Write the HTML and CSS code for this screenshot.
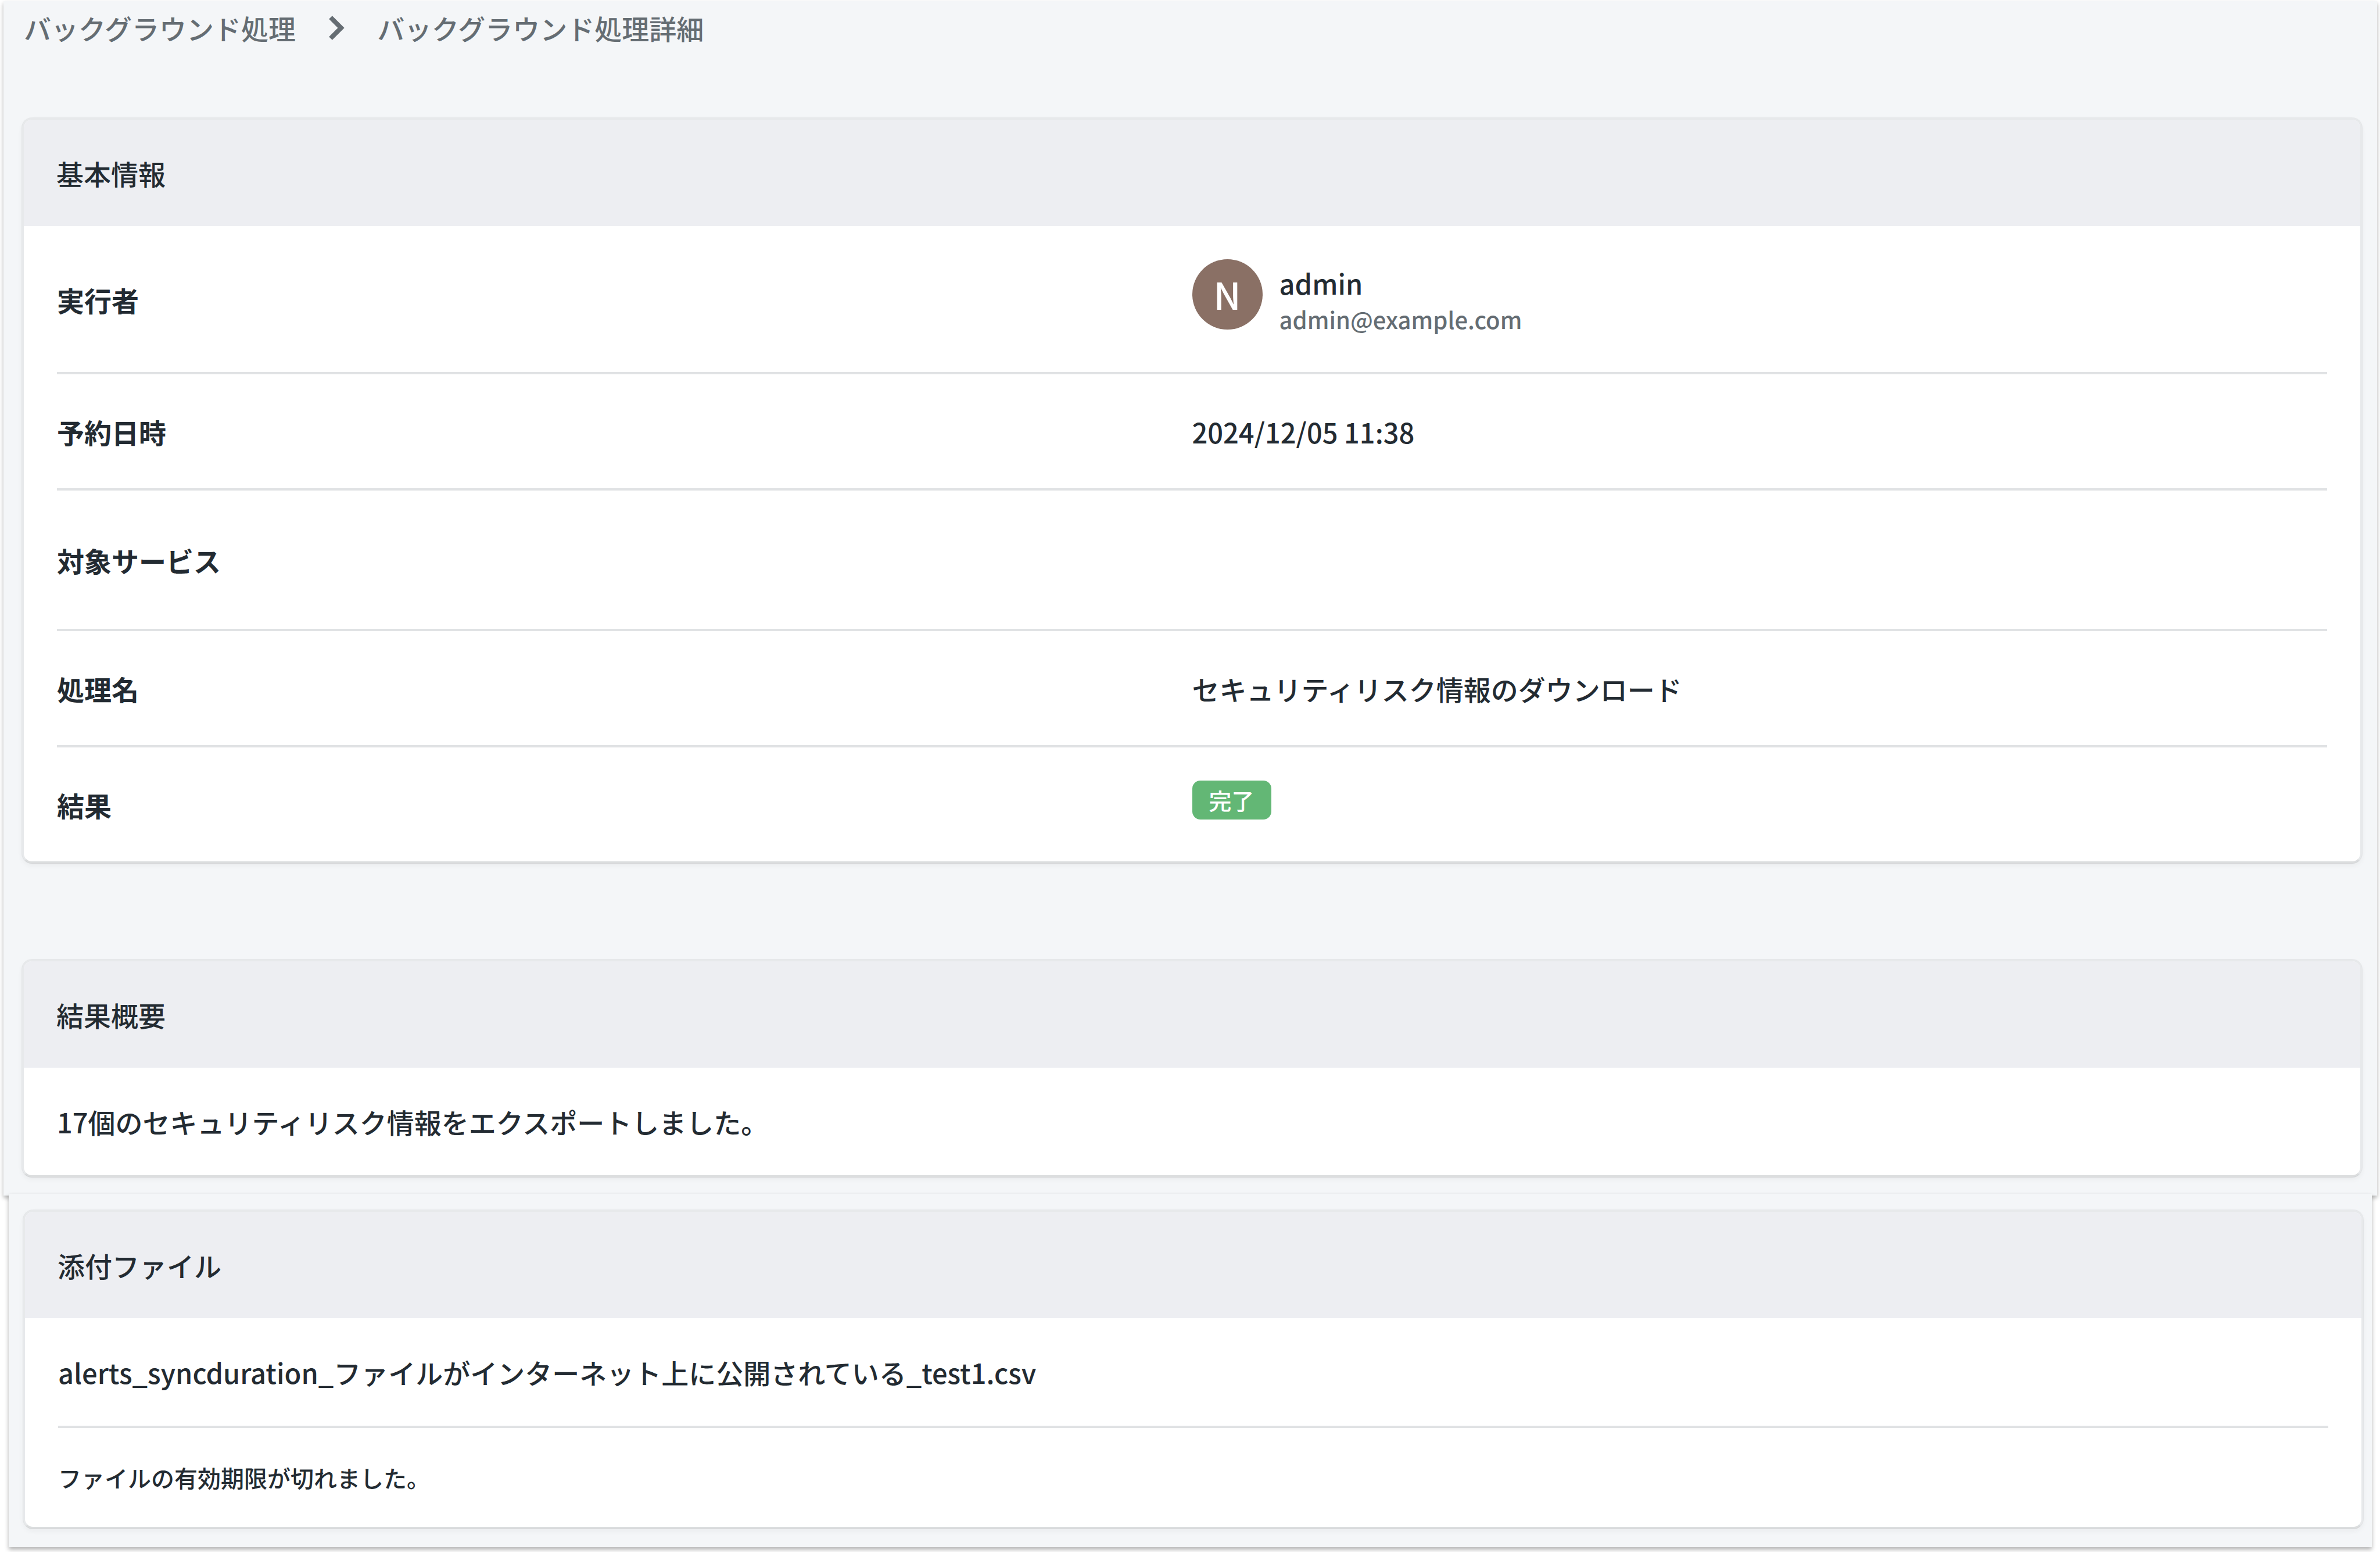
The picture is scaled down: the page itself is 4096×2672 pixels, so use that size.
FILE: index.html
```html
<!DOCTYPE html>
<html lang="ja">
<head>
  <meta charset="UTF-8" />
  <meta name="viewport" content="width=device-width, initial-scale=1.0"/>
  <title>バックグラウンド処理詳細</title>
  <link rel="stylesheet" href="styles.css">
</head>
<body>
  <main class="panel panel-main">
    <nav class="breadcrumb">
      <a href="#">バックグラウンド処理</a>
      <svg class="chevron" viewBox="0 0 28 44" aria-hidden="true">
        <path d="M4 4 L22 22 L4 40" fill="none" stroke="currentColor" stroke-width="8"/>
      </svg>
      <span>バックグラウンド処理詳細</span>
    </nav>

    <section class="card">
      <h2 class="card-header">基本情報</h2>
      <dl class="card-body">
        <div class="row">
          <dt>実行者</dt>
          <dd class="user">
            <span class="avatar">N</span>
            <div class="user-text">
              <div class="user-name">admin</div>
              <div class="user-mail">admin@example.com</div>
            </div>
          </dd>
        </div>
        <div class="row">
          <dt>予約日時</dt>
          <dd>2024/12/05 11:38</dd>
        </div>
        <div class="row row-service">
          <dt>対象サービス</dt>
          <dd></dd>
        </div>
        <div class="row">
          <dt>処理名</dt>
          <dd>セキュリティリスク情報のダウンロード</dd>
        </div>
        <div class="row">
          <dt>結果</dt>
          <dd class="status"><span class="badge">完了</span></dd>
        </div>
      </dl>
    </section>

    <section class="card">
      <h2 class="card-header">結果概要</h2>
      <div class="card-body">
        <p class="line">17個のセキュリティリスク情報をエクスポートしました。</p>
      </div>
    </section>
  </main>

  <aside class="panel panel-files">
    <section class="card">
      <h2 class="card-header">添付ファイル</h2>
      <div class="card-body">
        <p class="line">alerts_syncduration_ファイルがインターネット上に公開されている_test1.csv</p>
        <p class="line note">ファイルの有効期限が切れました。</p>
      </div>
    </section>
  </aside>
</body>
</html>
```
FILE: styles.css
```css
* {
  box-sizing: border-box;
}
body {
  margin: 0;
  background: #fff;
  color: #232b32;
  font-family: "Noto Sans CJK JP", sans-serif;
  font-size: 47px;
  font-weight: 500;
  line-height: 71px;
}
h2, p, dl, dd {
  margin: 0;
}

/* panels */
.panel {
  background: #f4f6f8;
  box-shadow: 0 4px 7px rgba(0,0,0,0.3);
}
.panel-main {
  margin: 2px 5px 0 6px;
  padding: 10px 25px 31px 31px;
}
.panel-files {
  position: relative;
  margin: -3px 14px 8px 15px;
  padding: 27px 14px 31px 24px;
}

/* breadcrumb */
.breadcrumb {
  display: flex;
  align-items: center;
  gap: 56px;
  margin-bottom: 119px;
  padding-left: 4px;
  color: #656d73;
}
.breadcrumb a {
  color: inherit;
  text-decoration: none;
}
.chevron {
  width: 28px;
  height: 44px;
}

/* cards */
.card {
  border: 4px solid rgba(0,0,0,0.05);
  border-bottom-color: rgba(0,0,0,0.1);
  border-radius: 18px;
  background: #fff;
  background-clip: padding-box;
  box-shadow: 0 4px 8px rgba(0,0,0,0.04);
}
.card + .card {
  margin-top: 164px;
}
.card-header {
  padding: 56px;
  border-radius: 14px 14px 0 0;
  background: #edeef2;
  font-size: 47px;
  font-weight: 500;
}
.card-body {
  padding: 0 57px;
}
.row {
  display: grid;
  grid-template-columns: 1fr 1fr;
  align-items: center;
  padding: 57px 0 56px;
}
.row + .row,
.line + .line {
  border-top: 4px solid #e0e2e4;
}
.row + .row {
  min-height: 200px;
}
.row.row-service {
  min-height: 242px;
}
.row dt {
  font-weight: 700;
}
.line {
  padding: 57px 0;
}
.note {
  font-size: 40px;
  line-height: 56px;
}

/* user */
.user {
  display: flex;
  align-items: flex-start;
  gap: 29px;
  min-height: 138px;
}
.avatar {
  width: 121px;
  height: 121px;
  border-radius: 50%;
  background: #8a7065;
  color: #fff;
  font-size: 64px;
  line-height: 118px;
  text-align: center;
}
.user-text {
  padding-top: 12px;
}
.user-name {
  line-height: 58px;
}
.user-mail {
  color: #656d73;
  font-size: 40px;
  line-height: 66px;
}

/* status */
.status {
  display: flex;
  padding-bottom: 16px;
}
.badge {
  padding: 0 29px;
  border-radius: 14px;
  background: #63b775;
  color: #fff;
  font-size: 39px;
  line-height: 67px;
}
```
